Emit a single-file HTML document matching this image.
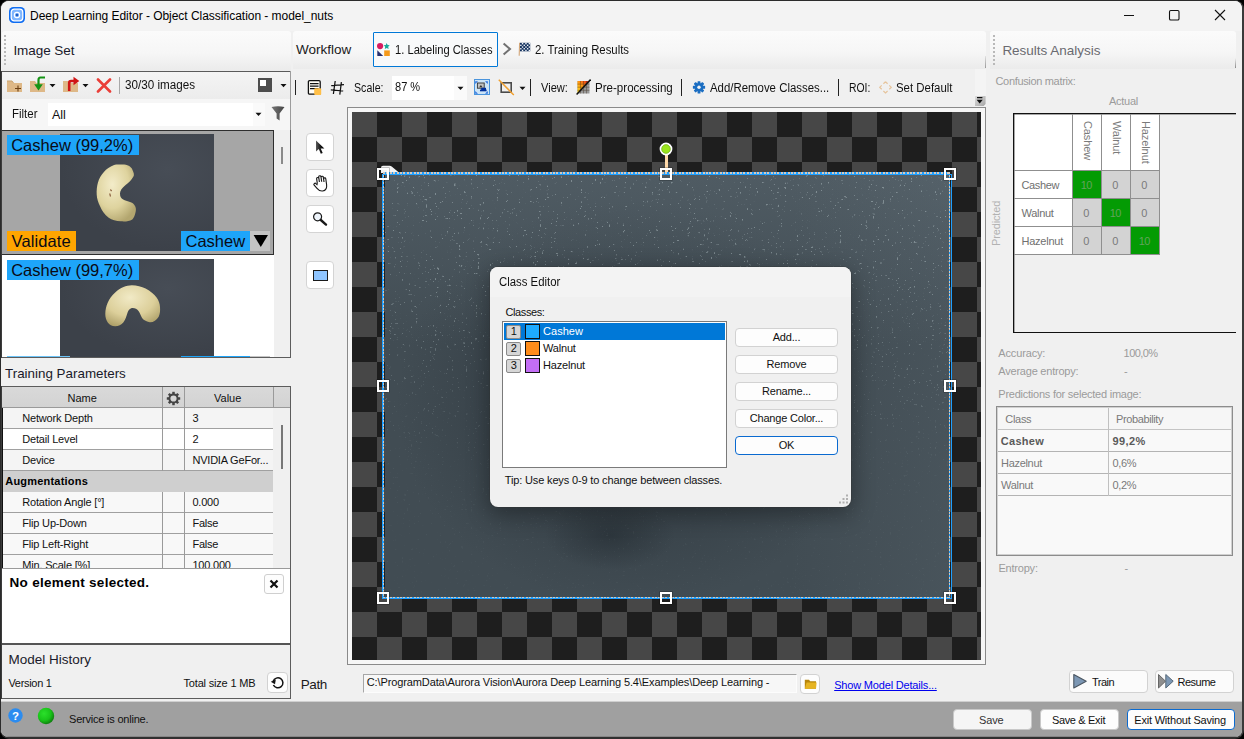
<!DOCTYPE html>
<html>
<head>
<meta charset="utf-8">
<title>Deep Learning Editor</title>
<style>
*{box-sizing:border-box;margin:0;padding:0}
html,body{width:1244px;height:739px;overflow:hidden;background:#000;font-family:"Liberation Sans",sans-serif;font-size:12px;color:#000}
.a{position:absolute}
.t{position:absolute;white-space:nowrap;line-height:1}
#win{position:absolute;left:0;top:0;width:1244px;height:739px;background:#f0f0f0;overflow:hidden;border-radius:9px;border:1px solid #2b2b2b;border-right:2px solid #3a3a3a;border-bottom:2px solid #303030}
#inner{position:absolute;left:-1px;top:-1px;width:1244px;height:739px}
.hdr{background:linear-gradient(#fbfbfb,#f6f6f6 55%,#ebebeb);border-radius:3px 3px 0 0}
.btn{position:absolute;background:#fdfdfd;border:1px solid #d2d2d2;border-radius:4px}
.cell{position:absolute}
</style>
</head>
<body>
<div id="win"><div id="inner">
<!-- title bar -->
<div class="a" style="left:0px;top:0px;width:1244px;height:31px;background:#f3f3f3"></div>
<svg class="a" style="left:9px;top:7px" width="16" height="16" viewBox="0 0 16 16"><rect x="0" y="0" width="16" height="16" rx="4.5" fill="#0f6df2"/>
<rect x="2.2" y="2.2" width="11.6" height="11.6" rx="3" fill="#7fb6ff" stroke="#fff" stroke-width="1.3"/>
<circle cx="8" cy="8" r="2.6" fill="#5a9cf8" stroke="#fff" stroke-width="1.2"/>
<circle cx="8" cy="8" r="0.9" fill="#0b3fa0"/></svg>
<div class="t" style="left:30.00px;top:10px;font-size:12px;letter-spacing:-0.04px;">Deep Learning Editor - Object Classification - model_nuts</div>
<svg class="a" style="left:1118px;top:4px" width="120" height="22" viewBox="0 0 120 22"><path d="M6 11.5H16" stroke="#111" stroke-width="1" fill="none"/>
<rect x="51.5" y="6.5" width="9.5" height="9.5" rx="1.3" stroke="#111" stroke-width="1.1" fill="none"/>
<path d="M97 6L107 16M107 6L97 16" stroke="#111" stroke-width="1.1" fill="none"/></svg>
<!-- left panel -->
<div class="a hdr" style="left:2px;top:31px;width:289px;height:40px"></div>
<div class="a" style="left:4px;top:35px;width:2px;height:31px;background:repeating-linear-gradient(#b9b9b9 0 2px,transparent 2px 4px)"></div>
<div class="t" style="left:13.40px;top:44px;font-size:13.5px;color:#1a1a2a;letter-spacing:-0.05px;">Image Set</div>
<div class="a" style="left:0px;top:71px;width:291px;height:1px;background:#5a5a5a"></div>
<div class="a" style="left:2px;top:72px;width:288px;height:27px;background:linear-gradient(#f4f4f4,#ececec)"></div>
<div class="a" style="left:2px;top:99px;width:288px;height:31px;background:#f6f6f6"></div>
<div class="a" style="left:0px;top:71px;width:2px;height:287px;background:#3c3c3c"></div>
<div class="a" style="left:290px;top:71px;width:1px;height:59px;background:#9c9c9c"></div>
<div class="a" style="left:290px;top:130px;width:1px;height:228px;background:#5c5c5c"></div>
<div class="a" style="left:290px;top:386px;width:1px;height:313px;background:#5c5c5c"></div>
<svg class="a" style="left:6px;top:75px" width="18" height="18" viewBox="0 0 18 18"><path d="M1 6h5l1.5 2H16v9H1z" fill="#deb887"/>
<path d="M1 6h5l1.5 2" fill="none" stroke="#c9a26f" stroke-width="1"/>
<path d="M9 13.5h6M12 10.5v6" stroke="#6b3f14" stroke-width="1.1"/></svg>
<svg class="a" style="left:29px;top:75px" width="18" height="18" viewBox="0 0 18 18"><path d="M1 6h5l1.5 2H16v9H1z" fill="#deb887"/>
<path d="M16 2.5H11.5Q9.5 2.5 9.5 5V12" fill="none" stroke="#159415" stroke-width="2.2"/>
<path d="M5.2 9.2H13.8L9.5 15.5z" fill="#159415"/></svg>
<svg class="a" style="left:49px;top:83px" width="7" height="5" viewBox="0 0 7 5"><path d="M0.5 1h6L3.5 4.2z" fill="#111"/></svg>
<svg class="a" style="left:62px;top:75px" width="18" height="18" viewBox="0 0 18 18"><path d="M1 6h5l1.5 2H16v9H1z" fill="#deb887"/>
<path d="M7.2 16V8Q7.2 6 9.2 6H12" fill="none" stroke="#d01414" stroke-width="2.6"/>
<path d="M11.5 1.8L17.3 6L11.5 10.2z" fill="#d01414"/></svg>
<svg class="a" style="left:82px;top:83px" width="7" height="5" viewBox="0 0 7 5"><path d="M0.5 1h6L3.5 4.2z" fill="#111"/></svg>
<svg class="a" style="left:96px;top:77px" width="16" height="16" viewBox="0 0 16 16"><path d="M2 2.5L14 14.5M14 2.5L2 14.5" stroke="#ea3e38" stroke-width="2.6" stroke-linecap="round"/></svg>
<div class="a" style="left:119px;top:77px;width:1px;height:17px;background:#a8a8a8"></div>
<div class="t" style="left:124.80px;top:79px;font-size:12px;color:#111;transform-origin:0 0;transform:scaleX(0.972);">30/30 images</div>
<div class="a" style="left:258px;top:78px;width:14px;height:14px;background:#4d4d4d"></div>
<div class="a" style="left:260px;top:80px;width:6px;height:6px;background:#fff"></div>
<svg class="a" style="left:280px;top:83px" width="7" height="5" viewBox="0 0 7 5"><path d="M0.5 1h6L3.5 4.2z" fill="#111"/></svg>
<div class="t" style="left:11.50px;top:108px;font-size:12px;color:#111;transform-origin:0 0;transform:scaleX(0.955);">Filter</div>
<div class="a" style="left:48px;top:103px;width:205px;height:23px;background:#fff"></div>
<div class="a" style="left:253px;top:103px;width:12px;height:23px;background:#fafafa"></div>
<div class="t" style="left:52.00px;top:109px;font-size:12.5px;color:#111;">All</div>
<svg class="a" style="left:255px;top:112px" width="7" height="5" viewBox="0 0 7 5"><path d="M0.5 0.8h6L3.5 4z" fill="#111"/></svg>
<svg class="a" style="left:271px;top:106px" width="14" height="15" viewBox="0 0 14 15"><defs><linearGradient id="fg" x1="0" x2="1"><stop offset="0" stop-color="#777"/><stop offset="1" stop-color="#444"/></linearGradient></defs>
<path d="M0.5 1Q7 -0.5 13.5 1L8.6 7.5V14.5L5.6 12.5V7.5z" fill="url(#fg)"/></svg>
<div class="a" style="left:2px;top:130px;width:272px;height:228px;background:#fff"></div>
<div class="a" style="left:274px;top:130px;width:16px;height:228px;background:#f0f0f0"></div>
<div class="a" style="left:2px;top:357px;width:289px;height:1px;background:#5c5c5c"></div>
<div class="a" style="left:2px;top:130px;width:272px;height:125px;background:#a6a6a6;border:1px solid #2e2e2e;border-left:none"></div>
<div class="a" style="left:60px;top:134px;width:154px;height:117px;background:radial-gradient(ellipse at 70% 30%,#474d56,#3c4149 70%)"></div>
<svg class="a" style="left:60px;top:134px" width="154" height="117" viewBox="0 0 154 117"><defs><radialGradient id="n1" cx="0.4" cy="0.35" r="0.7"><stop offset="0" stop-color="#f3ecc9"/><stop offset="0.6" stop-color="#ded39e"/><stop offset="1" stop-color="#b3a66f"/></radialGradient></defs>
<path d="M60.8 30.6C66 30 71 32 72.3 35.4C74 39 74.5 41 73.3 42.7C71 47 68 49 65.6 51.1C62 54 60 57 60 59.6C60 63 61 64.5 63.2 65.6C67 67.5 72 68 74 70.4C76 73 76.2 75 75.7 77.6C75 81 74 84 72.3 85.4C69 87.5 65 87.5 60.8 87.3C56 87 52 86 48.7 83.7C44.5 80.5 42 77 40.3 72.8C38 68 37 65 36.7 60.8C36.4 56 37 52 37.9 48.7C39 44.5 41 41 43.9 37.9C46.5 35 50 32.5 53.5 31.3C56 30.5 58 30.6 60.8 30.6z" fill="url(#n1)"/>
<path d="M50.5 55.5l1 1.6M49.8 59.5l.6 3" stroke="#7a4a2a" stroke-width="1.1"/></svg>
<div class="a" style="left:7px;top:135px;width:132px;height:20px;background:#1ea5fa"></div>
<div class="t" style="left:11.20px;top:137px;font-size:16.5px;color:#0a0a14;">Cashew (99,2%)</div>
<div class="a" style="left:7px;top:231px;width:69px;height:20px;background:#ffa500"></div>
<div class="t" style="left:11.50px;top:233px;font-size:16.5px;color:#0a0a14;letter-spacing:0.1px;">Validate</div>
<div class="a" style="left:181px;top:231px;width:69px;height:20px;background:#1ea5fa"></div>
<div class="t" style="left:185.50px;top:233px;font-size:16.5px;color:#0a0a14;">Cashew</div>
<div class="a" style="left:250px;top:231px;width:20px;height:20px;background:#c4c4c4"></div>
<svg class="a" style="left:253px;top:234px" width="16" height="14" viewBox="0 0 16 14"><path d="M0.6 1H15L7.8 13z" fill="#000"/></svg>
<div class="a" style="left:281px;top:147px;width:2px;height:17px;background:#8a8a8a"></div>
<div class="a" style="left:60px;top:259px;width:154px;height:98px;background:radial-gradient(ellipse at 70% 30%,#474d56,#3c4149 70%)"></div>
<svg class="a" style="left:60px;top:259px" width="154" height="98" viewBox="0 0 154 98"><defs><radialGradient id="n2" cx="0.45" cy="0.3" r="0.75"><stop offset="0" stop-color="#f1eac6"/><stop offset="0.6" stop-color="#dccf9a"/><stop offset="1" stop-color="#ad9f68"/></radialGradient></defs>
<path d="M71.8 26.2C77 26.5 81.5 27.5 85.6 29.4C90.5 32 94 35 96.6 38.4C98.8 41.5 99.8 44.5 100 48C100.3 52 100 55 98.7 57.7C96.5 61.5 93 63.5 89.7 63.2C86 62.5 83.5 61 82.1 59C80.8 56.8 80 54.2 78.7 52.2C77 49.8 74.5 48.8 71.8 49.1C69.5 49.8 68.3 51.5 67.6 53.5C66.5 57 65.5 60.5 63.5 63.2C61.3 66 58.5 67.3 55.2 67.3C52 67.2 49.3 65.8 47.6 63.2C46 60.5 45.3 58 45.3 54.9C45.3 51 46.2 47.3 47.6 43.9C49.3 40 52 36.5 55.2 33.5C57.7 31.2 60.5 29.3 63.5 28C66 27 69 26.3 71.8 26.2z" fill="url(#n2)"/></svg>
<div class="a" style="left:7px;top:260px;width:132px;height:20px;background:#1ea5fa"></div>
<div class="t" style="left:11.20px;top:262px;font-size:16.5px;color:#0a0a14;">Cashew (99,7%)</div>
<div class="a" style="left:7px;top:356px;width:63px;height:1px;background:#6cc4f8"></div>
<div class="a" style="left:181px;top:356px;width:69px;height:1px;background:#1ea5fa"></div>
<div class="a" style="left:250px;top:356px;width:20px;height:1px;background:#c4c4c4"></div>
<div class="t" style="left:5.00px;top:367px;font-size:13.4px;color:#1a1a2a;">Training Parameters</div>
<div class="a" style="left:2px;top:386px;width:289px;height:1px;background:#5c5c5c"></div>
<div class="a" style="left:2px;top:387px;width:288px;height:20px;background:linear-gradient(#d9d9d9,#d3d3d3)"></div>
<div class="a" style="left:2px;top:407px;width:288px;height:1px;background:#9a9a9a"></div>
<div class="a" style="left:2px;top:408px;width:288px;height:160px;background:#f0f0f0"></div>
<div class="a" style="left:3px;top:408px;width:270px;height:20px;background:#f4f4f4"></div>
<div class="a" style="left:3px;top:428px;width:270px;height:1px;background:#a0a0a0"></div>
<div class="a" style="left:3px;top:429px;width:270px;height:20px;background:#ffffff"></div>
<div class="a" style="left:3px;top:449px;width:270px;height:1px;background:#a0a0a0"></div>
<div class="a" style="left:3px;top:450px;width:270px;height:20px;background:#f4f4f4"></div>
<div class="a" style="left:3px;top:470px;width:270px;height:1px;background:#a0a0a0"></div>
<div class="a" style="left:3px;top:471px;width:270px;height:21px;background:#cfcfcf"></div>
<div class="a" style="left:3px;top:492px;width:270px;height:20px;background:#f8f8f8"></div>
<div class="a" style="left:3px;top:512px;width:270px;height:1px;background:#a0a0a0"></div>
<div class="a" style="left:3px;top:513px;width:270px;height:20px;background:#f8f8f8"></div>
<div class="a" style="left:3px;top:533px;width:270px;height:1px;background:#a0a0a0"></div>
<div class="a" style="left:3px;top:534px;width:270px;height:20px;background:#f8f8f8"></div>
<div class="a" style="left:3px;top:554px;width:270px;height:1px;background:#a0a0a0"></div>
<div class="a" style="left:3px;top:555px;width:270px;height:13px;background:#f8f8f8"></div>
<div class="a" style="left:162px;top:387px;width:1px;height:84px;background:#9a9a9a"></div>
<div class="a" style="left:184px;top:387px;width:1px;height:84px;background:#9a9a9a"></div>
<div class="a" style="left:273px;top:387px;width:1px;height:21px;background:#9a9a9a"></div>
<div class="a" style="left:162px;top:492px;width:1px;height:76px;background:#9a9a9a"></div>
<div class="a" style="left:184px;top:492px;width:1px;height:76px;background:#9a9a9a"></div>
<div class="a" style="left:2px;top:408px;width:1px;height:160px;background:#111"></div>
<div class="t" style="left:67.50px;top:393px;font-size:11px;color:#111;">Name</div>
<div class="t" style="left:214.00px;top:393px;font-size:11px;color:#111;">Value</div>
<svg class="a" style="left:166px;top:391px" width="15" height="15" viewBox="0 0 15 15"><g transform="translate(7.5 7.5)" fill="#444">
<circle r="4.1" fill="none" stroke="#444" stroke-width="2"/>
<g transform="rotate(0)"><rect x="-1.25" y="-6.7" width="2.5" height="2.4"/><rect x="-1.25" y="4.3" width="2.5" height="2.4"/></g><g transform="rotate(45)"><rect x="-1.25" y="-6.7" width="2.5" height="2.4"/><rect x="-1.25" y="4.3" width="2.5" height="2.4"/></g><g transform="rotate(90)"><rect x="-1.25" y="-6.7" width="2.5" height="2.4"/><rect x="-1.25" y="4.3" width="2.5" height="2.4"/></g><g transform="rotate(135)"><rect x="-1.25" y="-6.7" width="2.5" height="2.4"/><rect x="-1.25" y="4.3" width="2.5" height="2.4"/></g></g></svg>
<div class="t" style="left:22.20px;top:413px;font-size:11px;color:#111;letter-spacing:-0.17px;">Network Depth</div>
<div class="t" style="left:192.40px;top:413px;font-size:11px;color:#111;letter-spacing:-0.2px;">3</div>
<div class="t" style="left:22.20px;top:434px;font-size:11px;color:#111;letter-spacing:-0.17px;">Detail Level</div>
<div class="t" style="left:192.40px;top:434px;font-size:11px;color:#111;letter-spacing:-0.2px;">2</div>
<div class="t" style="left:22.20px;top:455px;font-size:11px;color:#111;letter-spacing:-0.17px;">Device</div>
<div class="t" style="left:192.40px;top:455px;font-size:11px;color:#111;letter-spacing:-0.2px;">NVIDIA GeFor...</div>
<div class="t" style="left:5.30px;top:476px;font-size:11px;font-weight:700;letter-spacing:0.2px;">Augmentations</div>
<div class="t" style="left:22.20px;top:497px;font-size:11px;color:#111;letter-spacing:-0.17px;">Rotation Angle [°]</div>
<div class="t" style="left:192.40px;top:497px;font-size:11px;color:#111;letter-spacing:-0.2px;">0.000</div>
<div class="t" style="left:22.20px;top:518px;font-size:11px;color:#111;letter-spacing:-0.17px;">Flip Up-Down</div>
<div class="t" style="left:192.40px;top:518px;font-size:11px;color:#111;letter-spacing:-0.2px;">False</div>
<div class="t" style="left:22.20px;top:539px;font-size:11px;color:#111;letter-spacing:-0.17px;">Flip Left-Right</div>
<div class="t" style="left:192.40px;top:539px;font-size:11px;color:#111;letter-spacing:-0.2px;">False</div>
<div class="t" style="left:22.20px;top:560px;font-size:11px;color:#111;letter-spacing:-0.17px;">Min. Scale [%]</div>
<div class="t" style="left:192.40px;top:560px;font-size:11px;color:#111;letter-spacing:-0.2px;">100.000</div>
<div class="a" style="left:281px;top:425px;width:2px;height:44px;background:#777"></div>
<div class="a" style="left:2px;top:568px;width:288px;height:1px;background:#9a9a9a"></div>
<div class="a" style="left:2px;top:569px;width:288px;height:74px;background:#fff"></div>
<div class="a" style="left:0px;top:386px;width:2px;height:313px;background:#3c3c3c"></div>
<div class="t" style="left:9.60px;top:576px;font-size:13.5px;font-weight:700;letter-spacing:0.27px;">No element selected.</div>
<div class="btn" style="left:264px;top:574px;width:20px;height:20px;border-color:#cfcfcf;border-radius:3px"></div>
<svg class="a" style="left:268px;top:578px" width="12" height="12" viewBox="0 0 12 12"><path d="M2.5 2.5L9.5 9.5M9.5 2.5L2.5 9.5" stroke="#111" stroke-width="2.2"/></svg>
<div class="a" style="left:2px;top:643px;width:288px;height:2px;background:#555"></div>
<div class="t" style="left:8.40px;top:653px;font-size:13.5px;color:#1a1a2a;">Model History</div>
<div class="t" style="left:8.40px;top:678px;font-size:11px;color:#111;letter-spacing:-0.3px;">Version 1</div>
<div class="t" style="left:183.50px;top:678px;font-size:11px;color:#111;letter-spacing:-0.18px;">Total size 1 MB</div>
<div class="btn" style="left:267px;top:672px;width:21px;height:21px"></div>
<svg class="a" style="left:270px;top:675px" width="15" height="15" viewBox="0 0 15 15"><path d="M3.2 6.2A5 5 0 1 1 3.4 10" fill="none" stroke="#111" stroke-width="1.5"/>
<path d="M0.8 6.8L5.8 4.6L5 9.2z" fill="#111"/></svg>
<div class="a" style="left:2px;top:698px;width:289px;height:1px;background:#5c5c5c"></div>
<div class="a" style="left:0px;top:701px;width:1244px;height:1px;background:#cfcfcf"></div>
<div class="a" style="left:0px;top:702px;width:1244px;height:37px;background:#a0a0a0"></div>
<div class="a" style="left:0px;top:736px;width:1244px;height:1px;background:#868686"></div>
<svg class="a" style="left:8px;top:708px" width="15" height="15" viewBox="0 0 15 15"><circle cx="7.5" cy="7.5" r="7.2" fill="#2b8cf0"/>
<text x="7.5" y="11.6" text-anchor="middle" font-family="Liberation Sans" font-weight="700" font-size="11.5" fill="#fff">?</text></svg>
<svg class="a" style="left:37px;top:707px" width="18" height="18" viewBox="0 0 18 18"><defs><radialGradient id="gb" cx="0.38" cy="0.35" r="0.75"><stop offset="0" stop-color="#2be02b"/><stop offset="0.55" stop-color="#19c419"/><stop offset="1" stop-color="#0b6a0b"/></radialGradient></defs>
<circle cx="9" cy="9" r="8.2" fill="url(#gb)"/></svg>
<div class="t" style="left:69.00px;top:714px;font-size:11px;color:#111;letter-spacing:-0.21px;">Service is online.</div>
<!-- workflow -->
<div class="a hdr" style="left:293px;top:31px;width:693px;height:38px"></div>
<div class="t" style="left:296.10px;top:43px;font-size:13.5px;color:#1a1a1a;letter-spacing:-0.03px;">Workflow</div>
<div class="a" style="left:373px;top:32px;width:125px;height:35px;background:#f8f9fa;border:1px solid #0078d7;border-radius:1px"></div>
<svg class="a" style="left:377px;top:43px" width="13" height="13" viewBox="0 0 13 13"><circle cx="3.1" cy="3.1" r="3.1" fill="#d81b60"/>
<path d="M9.7 0l.9 2 2.1.3-1.5 1.5.4 2.1-1.9-1-1.9 1 .4-2.1L6.7 2.3l2.1-.3z" fill="#1aa89a"/>
<path d="M0.3 7.2L6.2 13H0.3z" fill="#28306e"/>
<rect x="7.2" y="7.4" width="5.6" height="5.6" fill="#f59a1b"/></svg>
<div class="t" style="left:394.50px;top:44px;font-size:12px;color:#111;transform-origin:0 0;transform:scaleX(0.931);">1. Labeling Classes</div>
<svg class="a" style="left:502px;top:42px" width="10" height="14" viewBox="0 0 10 14"><path d="M1.6 1.4L8 7L1.6 12.6" fill="none" stroke="#707070" stroke-width="2"/></svg>
<svg class="a" style="left:518px;top:42px" width="14" height="15" viewBox="0 0 14 15"><path d="M1.6 0.8L1.2 13.8" stroke="#d2a679" stroke-width="1.1"/>
<rect x="2" y="0.8" width="10.2" height="8.5" fill="#12305c"/>
<g fill="#f4f6fa"><rect x="3.85" y="0.95" width="1.4" height="1.4"/><rect x="7.25" y="0.95" width="1.4" height="1.4"/><rect x="10.65" y="0.95" width="1.4" height="1.4"/><rect x="2.15" y="2.65" width="1.4" height="1.4"/><rect x="5.55" y="2.65" width="1.4" height="1.4"/><rect x="8.95" y="2.65" width="1.4" height="1.4"/><rect x="3.85" y="4.35" width="1.4" height="1.4"/><rect x="7.25" y="4.35" width="1.4" height="1.4"/><rect x="10.65" y="4.35" width="1.4" height="1.4"/><rect x="2.15" y="6.05" width="1.4" height="1.4"/><rect x="5.55" y="6.05" width="1.4" height="1.4"/><rect x="8.95" y="6.05" width="1.4" height="1.4"/><rect x="3.85" y="7.75" width="1.4" height="1.4"/><rect x="7.25" y="7.75" width="1.4" height="1.4"/><rect x="10.65" y="7.75" width="1.4" height="1.4"/></g></svg>
<div class="t" style="left:534.80px;top:44px;font-size:12px;color:#111;transform-origin:0 0;transform:scaleX(0.946);">2. Training Results</div>
<div class="a" style="left:293px;top:69px;width:682px;height:37px;background:#f0f0f0"></div>
<div class="a" style="left:295px;top:80px;width:1px;height:15px;background:#222"></div>
<svg class="a" style="left:307px;top:79px" width="15" height="17" viewBox="0 0 15 17"><rect x="1.4" y="1.6" width="11.8" height="13.6" rx="1.2" fill="#fffdf6" stroke="#111" stroke-width="1.3"/>
<path d="M3 4.6h8.6M3 7.1h8.6M3 9.6h8.6" stroke="#111" stroke-width="1.25"/>
<rect x="7.2" y="9.2" width="7" height="6.8" rx="1" fill="#ffbf47"/></svg>
<svg class="a" style="left:330px;top:80px" width="15" height="15" viewBox="0 0 15 15"><path d="M5.2 1L3.4 14M11.4 2.2L9.8 14.6M1.2 5.6L14 4.6M0.8 9.8L13.2 11" stroke="#111" stroke-width="1.25" fill="none"/></svg>
<div class="t" style="left:354.00px;top:82px;font-size:12px;color:#111;transform-origin:0 0;transform:scaleX(0.885);">Scale:</div>
<div class="a" style="left:392px;top:76px;width:62px;height:24px;background:#fff"></div>
<div class="a" style="left:454px;top:76px;width:13px;height:24px;background:#fafafa"></div>
<div class="t" style="left:395.00px;top:81px;font-size:12px;color:#111;transform-origin:0 0;transform:scaleX(0.92);">87 %</div>
<svg class="a" style="left:457px;top:86px" width="7" height="5" viewBox="0 0 7 5"><path d="M0.5 0.8h6L3.5 4z" fill="#111"/></svg>
<div class="a" style="left:474px;top:79px;width:16px;height:16px;background:#cce4f7;border:1px solid #4a94dc"></div>
<svg class="a" style="left:475px;top:81px" width="13" height="13" viewBox="0 0 13 13"><g fill="#2a6fe0"><path d="M0.2 0.2h2.8L0.2 3z"/><path d="M12.8 0.2v2.8L10 0.2z"/><path d="M12.8 12.8h-2.8L12.8 10z"/><path d="M0.2 12.8v-2.8L3 12.8z"/></g>
<rect x="2.4" y="2" width="6.8" height="5.2" fill="#c2c2c2" stroke="#333" stroke-width="0.9"/>
<path d="M4.2 6.2l1.7-2.3 1.6 2.3z" fill="#333"/>
<rect x="6.2" y="6.8" width="4.8" height="2.4" fill="#00309c"/><rect x="5" y="8.6" width="6.6" height="1.7" fill="#00309c"/></svg>
<svg class="a" style="left:498px;top:79px" width="17" height="17" viewBox="0 0 17 17"><rect x="3.2" y="3.8" width="10" height="9.4" fill="none" stroke="#4a4a4a" stroke-width="1.6"/>
<path d="M0.8 0.8L15.8 16" stroke="#f0a030" stroke-width="1.5"/></svg>
<svg class="a" style="left:519px;top:86px" width="7" height="5" viewBox="0 0 7 5"><path d="M0.5 0.8h6L3.5 4z" fill="#111"/></svg>
<div class="a" style="left:530px;top:79px;width:1px;height:17px;background:#222"></div>
<div class="t" style="left:541.20px;top:82px;font-size:12px;color:#111;transform-origin:0 0;transform:scaleX(0.924);">View:</div>
<svg class="a" style="left:576px;top:79px" width="15" height="16" viewBox="0 0 15 16"><defs><linearGradient id="pp" x1="0" y1="1" x2="1" y2="0"><stop offset="0" stop-color="#ffe11a"/><stop offset="0.5" stop-color="#ff9a12"/><stop offset="1" stop-color="#e3151a"/></linearGradient></defs>
<rect x="1.5" y="2" width="12" height="12.5" fill="#9a9a9a"/>
<path d="M1.5 2h12L1.5 14.5z" fill="url(#pp)"/>
<path d="M1.5 5.1h12M1.5 8.2h12M1.5 11.3h12M4.5 2v12.5M7.5 2v12.5M10.5 2v12.5" stroke="#3a2a1a" stroke-width="0.55" opacity="0.7"/>
<path d="M14.6 0.6L0.6 15.4" stroke="#111" stroke-width="1.5"/></svg>
<div class="t" style="left:594.70px;top:82px;font-size:12px;color:#111;transform-origin:0 0;transform:scaleX(0.964);">Pre-processing</div>
<div class="a" style="left:681px;top:79px;width:1px;height:17px;background:#222"></div>
<svg class="a" style="left:692px;top:80px" width="14" height="14" viewBox="0 0 14 14"><g transform="translate(7 7.3) scale(0.9)" fill="#1b6ec2">
<circle r="4.7"/>
<g transform="rotate(0)"><rect x="-1.6" y="-6.8" width="3.2" height="3.2" rx="0.6"/><rect x="-1.6" y="3.6" width="3.2" height="3.2" rx="0.6"/></g><g transform="rotate(45)"><rect x="-1.6" y="-6.8" width="3.2" height="3.2" rx="0.6"/><rect x="-1.6" y="3.6" width="3.2" height="3.2" rx="0.6"/></g><g transform="rotate(90)"><rect x="-1.6" y="-6.8" width="3.2" height="3.2" rx="0.6"/><rect x="-1.6" y="3.6" width="3.2" height="3.2" rx="0.6"/></g><g transform="rotate(135)"><rect x="-1.6" y="-6.8" width="3.2" height="3.2" rx="0.6"/><rect x="-1.6" y="3.6" width="3.2" height="3.2" rx="0.6"/></g>
<circle r="1.9" fill="#f2f2f2"/></g></svg>
<div class="t" style="left:710.40px;top:82px;font-size:12px;color:#111;transform-origin:0 0;transform:scaleX(0.951);">Add/Remove Classes...</div>
<div class="a" style="left:838px;top:79px;width:1px;height:17px;background:#222"></div>
<div class="t" style="left:849.40px;top:82px;font-size:12px;color:#111;transform-origin:0 0;transform:scaleX(0.866);">ROI:</div>
<svg class="a" style="left:879px;top:81px" width="13" height="13" viewBox="0 0 13 13"><path d="M6.5 0.8L8.6 2.7M10.3 4.4l2 1.9-2 1.9M8.6 10l-2.1 1.9L4.4 10M2.7 8.2L0.7 6.3l2-1.9M4.4 2.7l2.1-1.9" fill="none" stroke="#e6c49c" stroke-width="1.2"/></svg>
<div class="t" style="left:896.20px;top:82px;font-size:12px;color:#111;transform-origin:0 0;transform:scaleX(0.951);">Set Default</div>
<div class="a" style="left:975px;top:69px;width:11px;height:37px;background:#f4f4f4"></div>
<svg class="a" style="left:975px;top:96px" width="11" height="10" viewBox="0 0 11 10"><defs><linearGradient id="ov" x1="0" y1="0" x2="1" y2="1"><stop offset="0" stop-color="#dedede"/><stop offset="1" stop-color="#a4a4a4"/></linearGradient></defs>
<path d="M0 0H10.6V8L8.6 10H0z" fill="url(#ov)"/><path d="M2 1.6h5.4" stroke="#111" stroke-width="1.2"/><path d="M1.6 3.8h6.2L4.7 7.4z" fill="#111"/></svg>
<div class="a" style="left:985px;top:56px;width:1px;height:12px;background:linear-gradient(rgba(150,150,150,0.2),#9a9a9a)"></div>
<div class="btn" style="left:306px;top:133px;width:27.5px;height:27.5px;border-color:#d4d4d4;background:#fff"></div>
<div class="btn" style="left:306px;top:169px;width:27.5px;height:27.5px;border-color:#d4d4d4;background:#fff"></div>
<div class="btn" style="left:306px;top:205px;width:27.5px;height:27.5px;border-color:#d4d4d4;background:#fff"></div>
<div class="btn" style="left:306px;top:261px;width:27.5px;height:27.5px;border-color:#d4d4d4;background:#fff"></div>
<svg class="a" style="left:314px;top:139px" width="13" height="17" viewBox="0 0 13 17"><defs><linearGradient id="cg" x1="0" x2="1"><stop offset="0" stop-color="#5a5a5a"/><stop offset="0.6" stop-color="#111"/></linearGradient></defs><path d="M2 1.6V12.6L4.8 10.1L6.8 14.8L8.7 14L6.7 9.4H10.4z" fill="url(#cg)"/></svg>
<svg class="a" style="left:311.5px;top:173.5px" width="18" height="19" viewBox="0 0 18 19"><path transform="rotate(-8 9 10) scale(1.04 0.98)" d="M5.2 9.5V4.2a1.1 1.1 0 0 1 2.2 0V8M7.4 8V2.8a1.1 1.1 0 0 1 2.2 0V8M9.6 8V3.6a1.1 1.1 0 0 1 2.2 0V8.6M11.8 8.6V5.6a1.05 1.05 0 0 1 2.1 0V11.5C13.9 15 12.2 17.5 9.3 17.5C6.8 17.5 5.6 16.2 4.3 14L2 10.4a1.15 1.15 0 0 1 1.9-1.3L5.2 10.8" fill="#fff" stroke="#1a1a1a" stroke-width="1.1" stroke-linejoin="round"/></svg>
<svg class="a" style="left:312px;top:211px" width="16" height="16" viewBox="0 0 16 16"><circle cx="5.6" cy="5.8" r="4" fill="#eef4fb" stroke="#1a1a1a" stroke-width="1.2"/>
<path d="M8.8 9L14 13.6" stroke="#1a1a1a" stroke-width="2.4" stroke-linecap="round"/></svg>
<div class="a" style="left:312.5px;top:270px;width:15px;height:10.5px;background:#8fc5ff;border:1px solid #1a1a1a"></div>
<div class="a" style="left:347px;top:107px;width:639px;height:558px;background:#f6f6f6;border:1px solid #8a8a8a"></div>
<div class="a" style="left:352px;top:112px;width:629px;height:548px;background-color:#474747;background-image:conic-gradient(#1e1e1e 25%,#474747 0 50%,#1e1e1e 0 75%,#474747 0);background-size:50px 50px"></div>
<svg class="a" style="left:380px;top:165px" width="22" height="9" viewBox="0 0 22 9"><path d="M1 8V2.5Q1 0.8 3 0.8H9.5Q11 0.8 12 1.8L19.5 8z" fill="#f4f4f4"/></svg>
<div class="a" style="left:382px;top:173.6px;width:569.7px;height:1.2px;background:#1e9fff"></div>
<div class="a" style="left:382px;top:598.2px;width:569.7px;height:1.2px;background:#1e9fff"></div>
<div class="a" style="left:382px;top:173.6px;width:1.2px;height:425.8px;background:#1e9fff"></div>
<div class="a" style="left:950.5px;top:173.6px;width:1.2px;height:425.8px;background:#1e9fff"></div>
<div class="a" style="left:383.2px;top:172.4px;width:566.8px;height:1.2px;background:repeating-linear-gradient(90deg,#d2c9be 0 2px,#1e9fff 2px 3.4px)"></div>
<div class="a" style="left:383.2px;top:597px;width:566.8px;height:1.2px;background:repeating-linear-gradient(90deg,#d2c9be 0 2px,#1e9fff 2px 3.4px)"></div>
<div class="a" style="left:383.2px;top:172.4px;width:1.3px;height:425.8px;background:repeating-linear-gradient(#d2c9be 0 2px,#1e9fff 2px 3.4px)"></div>
<div class="a" style="left:948.7px;top:172.4px;width:1.3px;height:425.8px;background:repeating-linear-gradient(#d2c9be 0 2px,#1e9fff 2px 3.4px)"></div>
<div class="a" style="left:384.5px;top:174.8px;width:564.2px;height:422.2px;background:#414c53"></div>
<div class="a" style="left:384.5px;top:174.8px;width:564.2px;height:422.2px;background:radial-gradient(ellipse 42% 48% at 44% 54%,rgba(44,53,60,0.6) 0,rgba(44,53,60,0.42) 55%,rgba(44,53,60,0) 100%)"></div>
<div class="a" style="left:384.5px;top:174.8px;width:564.2px;height:170px;background:linear-gradient(rgba(120,135,145,0.26),rgba(120,135,145,0))"></div>
<div class="a" style="left:790px;top:174.8px;width:158.70000000000005px;height:422.2px;background:linear-gradient(90deg,rgba(120,135,145,0),rgba(120,135,145,0.13))"></div>
<div class="a" style="left:545px;top:500px;width:130px;height:70px;background:radial-gradient(ellipse 50% 50% at 50% 50%,rgba(36,44,50,0.6),rgba(36,44,50,0))"></div>
<svg class="a" style="left:384.5px;top:174.8px;-webkit-mask-image:linear-gradient(#000 0,#000 25%,rgba(0,0,0,0.15) 70%,rgba(0,0,0,0.1) 100%);mask-image:linear-gradient(#000 0,#000 25%,rgba(0,0,0,0.15) 70%,rgba(0,0,0,0.1) 100%)" width="564.2" height="422.2"><filter id="nz" x="0" y="0" width="100%" height="100%"><feTurbulence type="fractalNoise" baseFrequency="0.42" numOctaves="2" seed="7"/><feColorMatrix type="matrix" values="0 0 0 0 0.62  0 0 0 0 0.72  0 0 0 0 0.74  7 7 0 0 -8.9"/></filter><rect width="564.2" height="422.2" filter="url(#nz)" opacity="0.38"/></svg>
<div class="a" style="left:665px;top:154px;width:3px;height:18px;background:#ffd9a8"></div>
<svg class="a" style="left:659px;top:142px" width="14" height="14" viewBox="0 0 14 14"><circle cx="7" cy="7" r="5.4" fill="#9be61e" stroke="#fff" stroke-width="2"/><circle cx="7" cy="7" r="4.3" fill="none" stroke="#6fae14" stroke-width="0.7"/></svg>
<div class="a" style="left:376.75px;top:167.75px;width:12.5px;height:12.5px;border:2.2px solid #fff;box-shadow:0 0 0 0.6px rgba(0,0,0,0.35)"></div>
<div class="a" style="left:659.75px;top:167.75px;width:12.5px;height:12.5px;border:2.2px solid #fff;box-shadow:0 0 0 0.6px rgba(0,0,0,0.35)"></div>
<div class="a" style="left:943.75px;top:167.75px;width:12.5px;height:12.5px;border:2.2px solid #fff;box-shadow:0 0 0 0.6px rgba(0,0,0,0.35)"></div>
<div class="a" style="left:376.75px;top:379.75px;width:12.5px;height:12.5px;border:2.2px solid #fff;box-shadow:0 0 0 0.6px rgba(0,0,0,0.35)"></div>
<div class="a" style="left:943.75px;top:379.75px;width:12.5px;height:12.5px;border:2.2px solid #fff;box-shadow:0 0 0 0.6px rgba(0,0,0,0.35)"></div>
<div class="a" style="left:376.75px;top:591.75px;width:12.5px;height:12.5px;border:2.2px solid #fff;box-shadow:0 0 0 0.6px rgba(0,0,0,0.35)"></div>
<div class="a" style="left:659.75px;top:591.75px;width:12.5px;height:12.5px;border:2.2px solid #fff;box-shadow:0 0 0 0.6px rgba(0,0,0,0.35)"></div>
<div class="a" style="left:943.75px;top:591.75px;width:12.5px;height:12.5px;border:2.2px solid #fff;box-shadow:0 0 0 0.6px rgba(0,0,0,0.35)"></div>
<div class="t" style="left:300.70px;top:678px;font-size:13.5px;color:#1a1a1a;letter-spacing:-0.4px;">Path</div>
<div class="a" style="left:363px;top:674px;width:434px;height:19px;background:#f7f7f7;border-top:1px solid #a6a6a6;border-left:1px solid #a6a6a6;border-bottom:1px solid #fcfcfc;border-right:1px solid #fcfcfc"></div>
<div class="t" style="left:366.70px;top:677px;font-size:11px;color:#111;letter-spacing:-0.11px;">C:\ProgramData\Aurora Vision\Aurora Deep Learning 5.4\Examples\Deep Learning -</div>
<div class="btn" style="left:800px;top:674px;width:20px;height:20px"></div>
<svg class="a" style="left:804px;top:678px" width="13" height="12" viewBox="0 0 13 12"><path d="M0.8 1.8H5L6.2 3.2H12V10.8H0.8z" fill="#b8860b"/>
<path d="M0.8 10.8L2.6 4.6H12.6L12 10.8z" fill="#e6b422"/></svg>
<div class="t" style="left:834.20px;top:680px;font-size:11px;color:#0000ee;letter-spacing:-0.18px;text-decoration:underline">Show Model Details...</div>
<div class="btn" style="left:1069px;top:670px;width:79px;height:23px;background:#fbfbfb"></div>
<svg class="a" style="left:1072px;top:673px" width="16" height="17" viewBox="0 0 16 17"><path d="M1.8 1.5V15L14.2 8.2z" fill="#7c97b4" stroke="#4a5560" stroke-width="1.1" stroke-linejoin="round"/></svg>
<div class="t" style="left:1092.00px;top:677px;font-size:11px;color:#111;letter-spacing:-0.5px;">Train</div>
<div class="btn" style="left:1155px;top:670px;width:79px;height:23px;background:#fbfbfb"></div>
<svg class="a" style="left:1157px;top:673px" width="18" height="17" viewBox="0 0 18 17"><path d="M1.5 1.5V15L8.5 8.2z" fill="#8e8e8e" stroke="#666" stroke-width="1" stroke-linejoin="round"/>
<path d="M8.8 1.5V15L16.2 8.2z" fill="#7c97b4" stroke="#566878" stroke-width="1" stroke-linejoin="round"/></svg>
<div class="t" style="left:1177.50px;top:677px;font-size:11px;color:#111;letter-spacing:-0.5px;">Resume</div>
<div class="btn" style="left:953px;top:709px;width:79px;height:21px;background:#f5f5f5;border-color:#c8c8c8"></div>
<div class="t" style="left:979.10px;top:715px;font-size:11px;color:#333;letter-spacing:-0.17px;">Save</div>
<div class="btn" style="left:1040px;top:709px;width:79px;height:21px;border-color:#c8c8c8"></div>
<div class="t" style="left:1051.90px;top:715px;font-size:11px;color:#111;letter-spacing:-0.33px;">Save &amp; Exit</div>
<div class="btn" style="left:1127px;top:709px;width:108px;height:21px;border:1.5px solid #0a6ad0"></div>
<div class="t" style="left:1134.30px;top:715px;font-size:11px;color:#111;letter-spacing:-0.2px;">Exit Without Saving</div>
<!-- results analysis -->
<div class="a hdr" style="left:990px;top:31px;width:246px;height:38px"></div>
<div class="a" style="left:993px;top:35px;width:2px;height:31px;background:repeating-linear-gradient(#b9b9b9 0 2px,transparent 2px 4px)"></div>
<div class="a" style="left:1235px;top:58px;width:1px;height:10px;background:linear-gradient(rgba(120,120,120,0),#8a8a8a)"></div>
<div class="t" style="left:1002.40px;top:44px;font-size:13.5px;color:#6a6a70;letter-spacing:-0.02px;">Results Analysis</div>
<div class="a" style="left:1242px;top:31px;width:1px;height:670px;background:#9a9a9a"></div>
<div class="t" style="left:995.50px;top:76px;font-size:11px;color:#9b9b9b;letter-spacing:-0.33px;">Confusion matrix:</div>
<div class="t" style="left:1109.00px;top:96px;font-size:11px;color:#9b9b9b;letter-spacing:-0.27px;">Actual</div>
<div class="a" style="left:1013px;top:113px;width:223px;height:1px;background:#111"></div>
<div class="a" style="left:1014px;top:114px;width:222px;height:1px;background:rgba(0,0,0,0.3)"></div>
<div class="a" style="left:1013px;top:113px;width:1px;height:220px;background:#111"></div>
<div class="a" style="left:1014px;top:114px;width:1px;height:218px;background:rgba(0,0,0,0.3)"></div>
<div class="a" style="left:1013px;top:332px;width:223px;height:1px;background:#111"></div>
<div class="a" style="left:1014.5px;top:114.5px;width:145px;height:140px;background:#fff"></div>
<div class="a" style="left:1073px;top:171px;width:28px;height:27px;background:#049b04"></div>
<div class="a" style="left:1102px;top:171px;width:28px;height:27px;background:#d3d3d3"></div>
<div class="a" style="left:1131px;top:171px;width:28px;height:27px;background:#d3d3d3"></div>
<div class="a" style="left:1073px;top:199px;width:28px;height:27px;background:#d3d3d3"></div>
<div class="a" style="left:1102px;top:199px;width:28px;height:27px;background:#049b04"></div>
<div class="a" style="left:1131px;top:199px;width:28px;height:27px;background:#d3d3d3"></div>
<div class="a" style="left:1073px;top:227px;width:28px;height:27px;background:#d3d3d3"></div>
<div class="a" style="left:1102px;top:227px;width:28px;height:27px;background:#d3d3d3"></div>
<div class="a" style="left:1131px;top:227px;width:28px;height:27px;background:#049b04"></div>
<div class="a" style="left:1072px;top:114px;width:1px;height:141px;background:#8f8f8f"></div>
<div class="a" style="left:1101px;top:114px;width:1px;height:141px;background:#8f8f8f"></div>
<div class="a" style="left:1130px;top:114px;width:1px;height:141px;background:#8f8f8f"></div>
<div class="a" style="left:1159px;top:114px;width:1px;height:141px;background:#8f8f8f"></div>
<div class="a" style="left:1014px;top:170px;width:146px;height:1px;background:#8f8f8f"></div>
<div class="a" style="left:1014px;top:198px;width:146px;height:1px;background:#8f8f8f"></div>
<div class="a" style="left:1014px;top:226px;width:146px;height:1px;background:#8f8f8f"></div>
<div class="a" style="left:1014px;top:254px;width:146px;height:1px;background:#8f8f8f"></div>
<div class="t" style="left:1088.5px;top:121px;font-size:11px;color:#7a7a7a;letter-spacing:-0.1px;transform-origin:0 0;transform:rotate(90deg) translate(0,-4px)">Cashew</div>
<div class="t" style="left:1117.5px;top:121px;font-size:11px;color:#7a7a7a;letter-spacing:-0.1px;transform-origin:0 0;transform:rotate(90deg) translate(0,-4px)">Walnut</div>
<div class="t" style="left:1146.5px;top:121px;font-size:11px;color:#7a7a7a;letter-spacing:-0.1px;transform-origin:0 0;transform:rotate(90deg) translate(0,-4px)">Hazelnut</div>
<div class="t" style="left:1021.50px;top:180px;font-size:11px;color:#707070;letter-spacing:-0.35px;">Cashew</div>
<div class="t" style="left:1021.50px;top:208px;font-size:11px;color:#707070;letter-spacing:-0.3px;">Walnut</div>
<div class="t" style="left:1021.50px;top:236px;font-size:11px;color:#707070;letter-spacing:-0.24px;">Hazelnut</div>
<div class="t" style="left:1080.80px;top:180px;font-size:11px;color:#62a35c;letter-spacing:-0.6px;">10</div>
<div class="t" style="left:1112.30px;top:180px;font-size:11px;color:#7a7a7a;">0</div>
<div class="t" style="left:1141.30px;top:180px;font-size:11px;color:#7a7a7a;">0</div>
<div class="t" style="left:1083.30px;top:208px;font-size:11px;color:#7a7a7a;">0</div>
<div class="t" style="left:1109.80px;top:208px;font-size:11px;color:#62a35c;letter-spacing:-0.6px;">10</div>
<div class="t" style="left:1141.30px;top:208px;font-size:11px;color:#7a7a7a;">0</div>
<div class="t" style="left:1083.30px;top:236px;font-size:11px;color:#7a7a7a;">0</div>
<div class="t" style="left:1112.30px;top:236px;font-size:11px;color:#7a7a7a;">0</div>
<div class="t" style="left:1138.80px;top:236px;font-size:11px;color:#62a35c;letter-spacing:-0.6px;">10</div>
<div class="t" style="left:990.5px;top:246px;font-size:11px;color:#b2b2b2;letter-spacing:-0.15px;transform-origin:0 0;transform:rotate(-90deg)">Predicted</div>
<div class="t" style="left:998.30px;top:348px;font-size:11px;color:#9b9b9b;letter-spacing:-0.15px;">Accuracy:</div>
<div class="t" style="left:1123.60px;top:348px;font-size:11px;color:#9b9b9b;letter-spacing:-0.55px;">100,0%</div>
<div class="t" style="left:998.30px;top:366px;font-size:11px;color:#9b9b9b;letter-spacing:-0.22px;">Average entropy:</div>
<div class="t" style="left:1124.00px;top:366px;font-size:11px;color:#9b9b9b;">-</div>
<div class="t" style="left:998.30px;top:389px;font-size:11px;color:#9b9b9b;letter-spacing:-0.24px;">Predictions for selected image:</div>
<div class="a" style="left:996px;top:406px;width:237px;height:150px;background:#f9f9f9;border:1px solid #8c8c8c"></div>
<div class="a" style="left:997px;top:407px;width:235px;height:148px;border:1px solid #d0d0d0"></div>
<div class="a" style="left:998px;top:408px;width:233px;height:21px;background:#f6f6f6"></div>
<div class="a" style="left:998px;top:429px;width:233px;height:1px;background:#c4c4c4"></div>
<div class="a" style="left:998px;top:451px;width:233px;height:1px;background:#b4b4b4"></div>
<div class="a" style="left:998px;top:473px;width:233px;height:1px;background:#b4b4b4"></div>
<div class="a" style="left:998px;top:495px;width:233px;height:1px;background:#b4b4b4"></div>
<div class="a" style="left:1108px;top:408px;width:1px;height:88px;background:#c0c0c0"></div>
<div class="t" style="left:1005.30px;top:414px;font-size:11px;color:#7a7a7a;letter-spacing:-0.3px;">Class</div>
<div class="t" style="left:1116.10px;top:414px;font-size:11px;color:#7a7a7a;letter-spacing:-0.4px;">Probability</div>
<div class="t" style="left:1000.80px;top:436px;font-size:11px;color:#5a5a5a;font-weight:700;letter-spacing:0.27px;">Cashew</div>
<div class="t" style="left:1112.40px;top:436px;font-size:11px;color:#5a5a5a;font-weight:700;letter-spacing:0.45px;">99,2%</div>
<div class="t" style="left:1001.00px;top:458px;font-size:11px;color:#7a7a7a;letter-spacing:-0.3px;">Hazelnut</div>
<div class="t" style="left:1112.40px;top:458px;font-size:11px;color:#7a7a7a;letter-spacing:-0.3px;">0,6%</div>
<div class="t" style="left:1001.00px;top:480px;font-size:11px;color:#7a7a7a;letter-spacing:-0.3px;">Walnut</div>
<div class="t" style="left:1112.40px;top:480px;font-size:11px;color:#7a7a7a;letter-spacing:-0.3px;">0,2%</div>
<div class="t" style="left:998.40px;top:563px;font-size:11px;color:#9b9b9b;letter-spacing:-0.2px;">Entropy:</div>
<div class="t" style="left:1124.40px;top:563px;font-size:11px;color:#9b9b9b;">-</div>
<!-- class editor dialog -->
<div class="a" style="left:490px;top:267px;width:361px;height:240px;background:#f0f0f0;border-radius:8px;box-shadow:0 0 0 1px rgba(50,50,50,0.3),0 6px 22px 2px rgba(0,0,0,0.32);overflow:hidden"></div>
<div class="a" style="left:490px;top:267px;width:361px;height:30px;background:#f3f3f3;border-radius:8px 8px 0 0"></div>
<div class="t" style="left:499.00px;top:276px;font-size:12px;color:#111;transform-origin:0 0;transform:scaleX(0.947);">Class Editor</div>
<div class="t" style="left:505.50px;top:307px;font-size:11px;color:#111;letter-spacing:-0.4px;">Classes:</div>
<div class="a" style="left:502px;top:321px;width:225px;height:147px;background:#fff;border:1px solid #7a7a7a"></div>
<div class="a" style="left:504px;top:323px;width:221px;height:17px;background:#0078d7"></div>
<div class="a" style="left:506px;top:325px;width:15px;height:14px;background:#d6d6d6;border:1px solid #8a8a8a;border-radius:2px"></div>
<div class="t" style="left:510.70px;top:326px;font-size:11px;color:#111;">1</div>
<div class="a" style="left:525px;top:324px;width:15px;height:15px;background:#1eaaff;border:1px solid #111"></div>
<div class="t" style="left:543.10px;top:326px;font-size:11px;color:#fff;">Cashew</div>
<div class="a" style="left:506px;top:342px;width:15px;height:14px;background:#d6d6d6;border:1px solid #8a8a8a;border-radius:2px"></div>
<div class="t" style="left:510.70px;top:343px;font-size:11px;color:#111;">2</div>
<div class="a" style="left:525px;top:341px;width:15px;height:15px;background:#ff8c1a;border:1px solid #111"></div>
<div class="t" style="left:543.10px;top:343px;font-size:11px;color:#111;letter-spacing:-0.2px;">Walnut</div>
<div class="a" style="left:506px;top:359px;width:15px;height:14px;background:#d6d6d6;border:1px solid #8a8a8a;border-radius:2px"></div>
<div class="t" style="left:510.70px;top:360px;font-size:11px;color:#111;">3</div>
<div class="a" style="left:525px;top:358px;width:15px;height:15px;background:#c36ef5;border:1px solid #111"></div>
<div class="t" style="left:543.10px;top:360px;font-size:11px;color:#111;letter-spacing:-0.2px;">Hazelnut</div>
<div class="btn" style="left:735px;top:328px;width:103px;height:19px;"></div>
<div class="t" style="left:735px;top:332px;width:103px;text-align:center;font-size:11px;color:#111;letter-spacing:-0.2px">Add...</div>
<div class="btn" style="left:735px;top:355px;width:103px;height:19px;"></div>
<div class="t" style="left:735px;top:359px;width:103px;text-align:center;font-size:11px;color:#111;letter-spacing:-0.2px">Remove</div>
<div class="btn" style="left:735px;top:382px;width:103px;height:19px;"></div>
<div class="t" style="left:735px;top:386px;width:103px;text-align:center;font-size:11px;color:#111;letter-spacing:-0.2px">Rename...</div>
<div class="btn" style="left:735px;top:409px;width:103px;height:19px;"></div>
<div class="t" style="left:735px;top:413px;width:103px;text-align:center;font-size:11px;color:#111;letter-spacing:-0.2px">Change Color...</div>
<div class="btn" style="left:735px;top:436px;width:103px;height:19px;border:1.5px solid #0a6ad0"></div>
<div class="t" style="left:735px;top:440px;width:103px;text-align:center;font-size:11px;color:#111;letter-spacing:-0.2px">OK</div>
<div class="t" style="left:504.80px;top:475px;font-size:11px;color:#111;letter-spacing:-0.15px;">Tip: Use keys 0-9 to change between classes.</div>
<svg class="a" style="left:838px;top:494px" width="11" height="11" viewBox="0 0 11 11"><g fill="#b0b0b0"><rect x="8" y="0.5" width="2" height="2"/><rect x="4.5" y="4" width="2" height="2"/><rect x="8" y="4" width="2" height="2"/>
<rect x="1" y="7.5" width="2" height="2"/><rect x="4.5" y="7.5" width="2" height="2"/><rect x="8" y="7.5" width="2" height="2"/></g></svg>
</div></div>
</body>
</html>
